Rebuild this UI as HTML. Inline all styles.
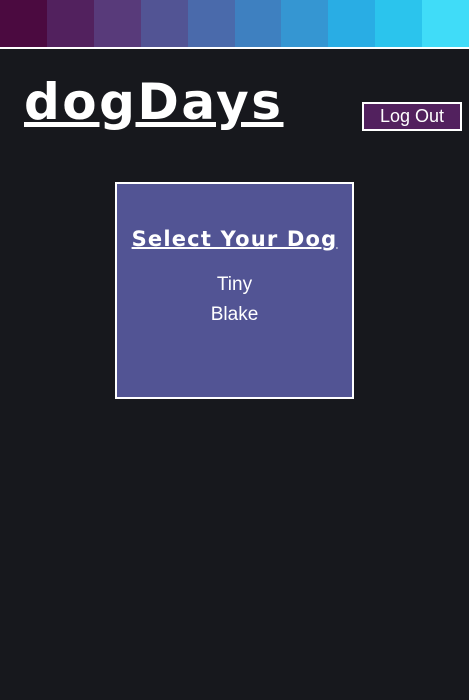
<!DOCTYPE html>
<html><head><style>
html,body{margin:0;padding:0;background:#17181d;width:469px;height:700px;overflow:hidden;font-family:"Liberation Sans",sans-serif;color:#fff}
.stripes{display:flex;height:47px;border-bottom:2px solid #fff}
.stripes div{flex:1}
h1{position:absolute;left:24px;top:72px;margin:0;font-family:"DejaVu Sans",sans-serif;font-weight:bold;font-size:50px;letter-spacing:2.5px;text-decoration:underline;text-decoration-thickness:5px;text-underline-offset:3px;line-height:60px}
.btn{position:absolute;left:362px;top:102px;width:96px;height:25px;border:2px solid #fff;background:#52215e;font-size:18px;text-align:center;line-height:25px}
.box{position:absolute;left:115px;top:182px;width:235px;height:213px;border:2px solid #fff;background:#525494;text-align:center}
.box h2{margin:40px 0 0;font-family:"DejaVu Sans",sans-serif;font-weight:bold;font-size:21px;letter-spacing:1.2px;white-space:nowrap;text-decoration:underline;text-decoration-thickness:2px;line-height:30px}
.box p{margin:0;font-size:19px;line-height:30px}
</style></head><body>
<div class="stripes">
<div style="background:#4b0a40"></div><div style="background:#52215e"></div><div style="background:#583a7a"></div><div style="background:#525494"></div><div style="background:#4a6aab"></div><div style="background:#3e80c0"></div><div style="background:#3596d2"></div><div style="background:#29ade4"></div><div style="background:#2bc4ed"></div><div style="background:#40dcf8"></div>
</div>
<h1>dogDays</h1>
<div class="btn">Log Out</div>
<div class="box">
<h2>Select Your Dog</h2>
<p style="margin-top:16px">Tiny</p>
<p>Blake</p>
</div>
</body></html>
